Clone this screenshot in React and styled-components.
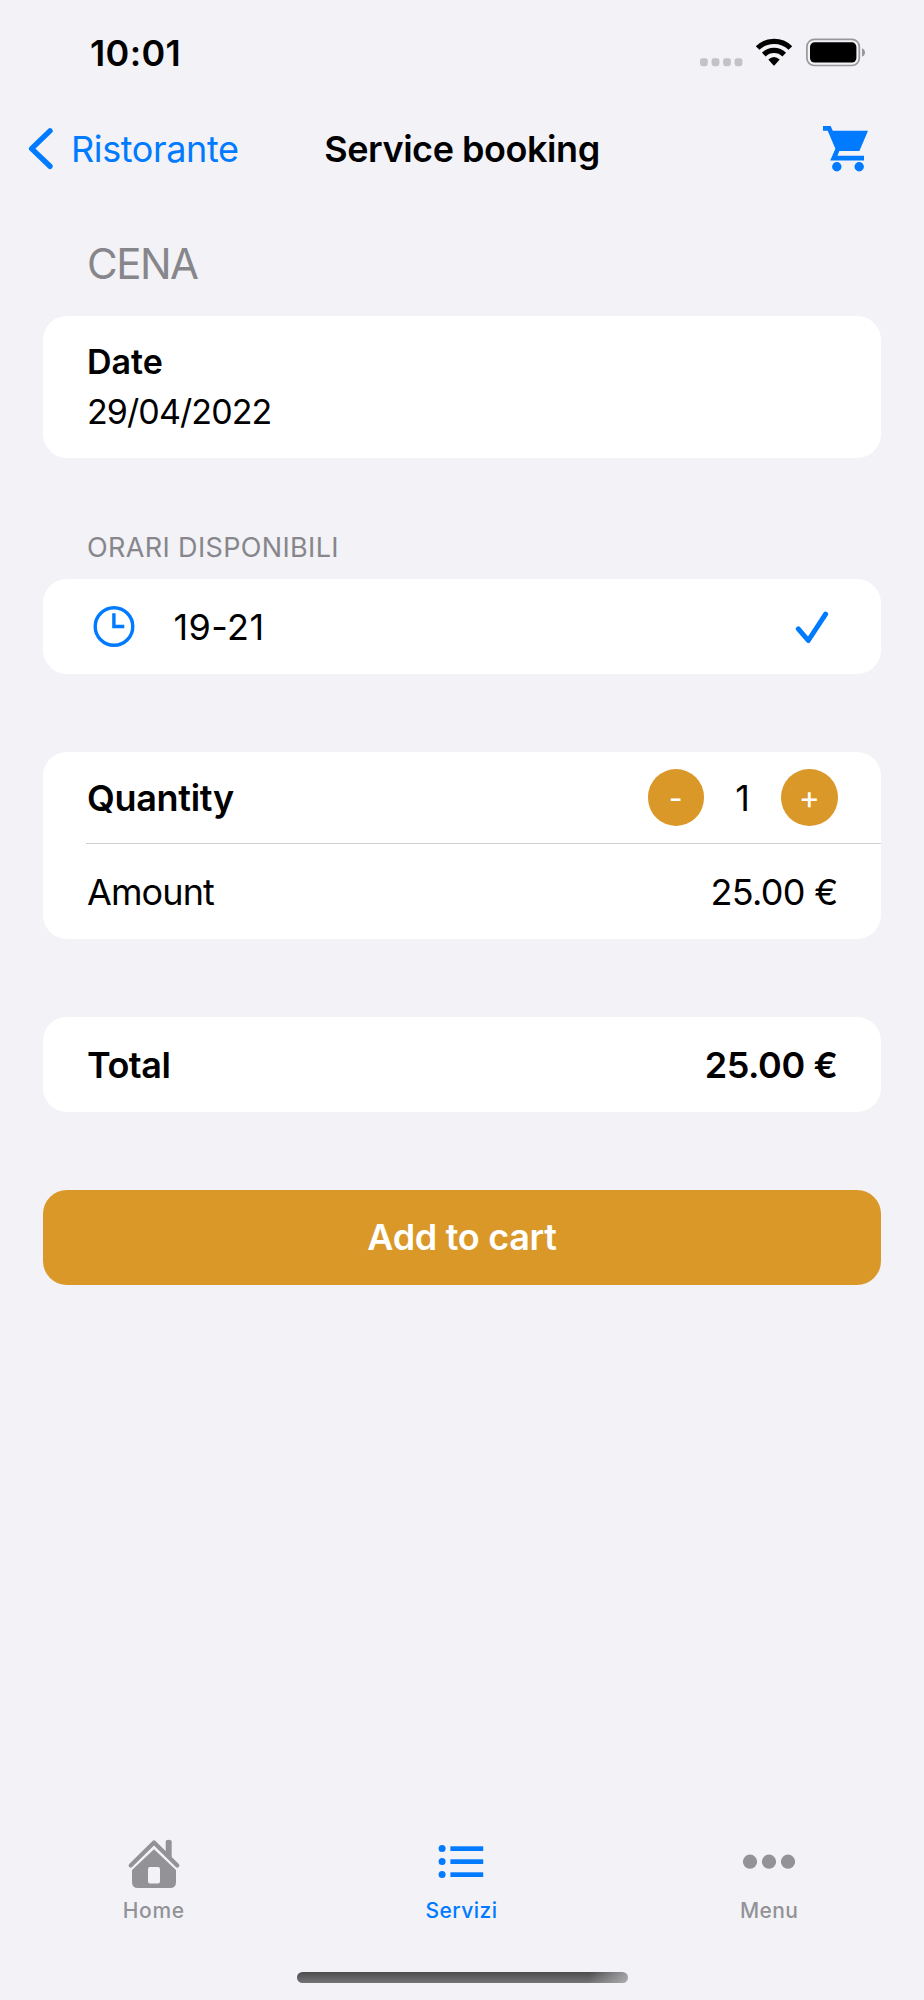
import React, { useState } from "react";
import styled, { createGlobalStyle } from "styled-components";

const BLUE = "#007aff";
const GOLD = "#da9828";
const GRAY = "#929297";

const GlobalStyle = createGlobalStyle`
  * { box-sizing: border-box; }
  body { margin: 0; background: #f2f2f7; }
  button { border: 0; padding: 0; background: none; font: inherit; color: inherit; cursor: pointer; }
  svg { display: block; flex: none; }
`;

const Screen = styled.div`
  width: 924px;
  height: 2000px;
  display: flex;
  flex-direction: column;
  background: #f2f2f7;
  color: #000;
  font-family: Inter, "Liberation Sans", sans-serif;
  font-size: 36px;
  line-height: 44px;
  white-space: nowrap;
`;

const StatusBar = styled.header`
  height: 106px;
  padding: 0 58px 0 90px;
  display: flex;
  justify-content: space-between;
  align-items: center;
`;

const Clock = styled.time`
  font-weight: 600;
  letter-spacing: 0.35px;
`;

const NavBar = styled.nav`
  height: 86px;
  padding: 0 56px 0 27px;
  display: grid;
  grid-template-columns: 1fr auto 1fr;
  align-items: center;
`;

const BackButton = styled.button`
  display: flex;
  align-items: center;
  gap: 16px;
  color: ${BLUE};
  letter-spacing: -0.38px;
`;

const Title = styled.h1`
  margin: 0 -14.5px 0 14.5px;
  font-size: 36px;
  font-weight: 600;
  letter-spacing: -0.45px;
`;

const CartButton = styled.button`
  display: flex;
  justify-self: end;
`;

const Main = styled.main`
  flex: 1;
  padding: 47px 43px 0;
`;

const SectionTitle = styled.h2`
  margin: 0 0 27px;
  padding-left: 44px;
  color: #86868b;
  font-weight: 400;
  font-size: 42px;
  line-height: 50px;
  letter-spacing: -1.5px;
`;

const SectionLabel = styled.h3`
  margin: 73.5px 0 15.5px;
  padding-left: 44px;
  color: #86868b;
  font-weight: 400;
  font-size: 27px;
  line-height: 32px;
  letter-spacing: 0.36px;
`;

const Card = styled.section`
  margin-top: ${(p) => (p.$spaced ? "78px" : "0")};
  border-radius: 24px;
  background: #fff;
`;

const DateCard = styled(Card)`
  padding: 21px 44px;
  font-size: 34px;
  line-height: 50px;
`;

const DateLabel = styled.div`
  font-weight: 600;
`;

const DateValue = styled.div`
  letter-spacing: -0.9px;
`;

const Row = styled.div`
  height: ${(p) => p.$height || 95}px;
  padding: 0 43.5px 0 44px;
  display: flex;
  align-items: center;
  justify-content: space-between;
`;

const Divider = styled.hr`
  height: 1px;
  margin: 0 0 0 43px;
  border: 0;
  background: #d0d0d3;
`;

const RowText = styled.span`
  font-weight: ${(p) => (p.$bold ? 600 : 400)};
  letter-spacing: ${(p) => p.$tracking || 0}px;
`;

const Slot = styled.div`
  display: flex;
  align-items: center;
  gap: 39px;
  padding-left: 5.5px;
`;

const CheckBox = styled.div`
  padding-right: 9px;
`;

const Stepper = styled.div`
  display: flex;
  align-items: center;
`;

const StepButton = styled.button`
  width: 56.5px;
  height: 56.5px;
  border-radius: 50%;
  background: ${GOLD};
  color: #fff;
  display: flex;
  align-items: center;
  justify-content: center;
  font-size: ${(p) => p.$size}px;
  line-height: 56px;
`;

const Count = styled.output`
  width: 77px;
  text-align: center;
`;

const PrimaryButton = styled.button`
  width: 100%;
  height: 95px;
  margin-top: 77.5px;
  border-radius: 24px;
  background: ${GOLD};
  color: #fff;
  font-weight: 600;
  letter-spacing: -0.3px;
`;

const TabBar = styled.nav`
  height: 137.5px;
  padding: 0 1px 0 0;
  display: grid;
  grid-template-columns: repeat(3, 1fr);
`;

const Tab = styled.button`
  display: flex;
  flex-direction: column;
  align-items: center;
  color: ${(p) => (p.$active ? BLUE : GRAY)};
  font-size: 21px;
  font-weight: 500;
  line-height: 25px;
  letter-spacing: ${(p) => p.$tracking}px;
`;

const TabIcon = styled.span`
  height: 56px;
  margin-bottom: 8px;
  display: flex;
  align-items: center;
`;

const HomeIndicator = styled.div`
  width: 331px;
  height: 11.5px;
  margin: 0 auto 17px;
  border-radius: 6px;
  background:
    linear-gradient(100deg, transparent 88%, rgba(190, 190, 194, 0.75) 100%),
    linear-gradient(#4c4c4d, #747476);
`;

function StatusGlyphs() {
  return (
    <svg width="166" height="30" viewBox="0 0 166 30">
      <g fill="#c3c2c7">
        <rect x="0" y="20.2" width="7.8" height="8" rx="2.4" />
        <rect x="11.6" y="20.2" width="7.8" height="8" rx="2.4" />
        <rect x="23.1" y="20.2" width="7.8" height="8" rx="2.4" />
        <rect x="34.6" y="20.2" width="7.8" height="8" rx="2.4" />
      </g>
      <g fill="none" stroke="#000" strokeWidth="5.2">
        <path d="M57.6 10A23.5 23.5 0 0 1 90.4 10" />
        <path d="M63.8 16.6A14.6 14.6 0 0 1 84.2 16.6" />
      </g>
      <path d="M68.3 21.6Q74 16.2 79.7 21.6L74.6 27.3Q74 27.9 73.4 27.3Z" />
      <rect x="106.9" y="1.3" width="52.4" height="26.2" rx="7.5" fill="none" stroke="#98979c" strokeWidth="1.7" />
      <rect x="110" y="4.3" width="46.4" height="20.2" rx="4.6" />
      <path d="M162 10.2C166 11.6 166 17.2 162 18.6Z" fill="#98979c" />
    </svg>
  );
}

function ChevronIcon() {
  return (
    <svg width="28" height="44" viewBox="0 0 28 44">
      <path d="M23 3.9L4.6 21.6L23 39.3" fill="none" stroke="currentColor" strokeWidth="5.4" strokeLinecap="round" strokeLinejoin="round" />
    </svg>
  );
}

function CartIcon() {
  return (
    <svg width="45" height="46" viewBox="0 0 45 46" fill={BLUE}>
      <path d="M0 0H7.6L9.8 4.8H45L36.4 25H16.4L14.4 29.8H41V34.4H7.2L12.4 22.8L4.7 4.8H0Z" />
      <circle cx="13.8" cy="40.8" r="4.7" />
      <circle cx="36.2" cy="40.8" r="4.7" />
    </svg>
  );
}

function ClockIcon() {
  return (
    <svg width="42" height="42" viewBox="0 0 42 42" fill="none" stroke={BLUE}>
      <circle cx="21" cy="20.5" r="18.8" strokeWidth="3.4" />
      <path d="M20.9 7.2V20.5H31.3" strokeWidth="3.4" />
    </svg>
  );
}

function CheckIcon() {
  return (
    <svg width="34" height="34" viewBox="0 0 34 34">
      <path d="M3.3 18.8L13.3 30.5L30.6 4.2" fill="none" stroke={BLUE} strokeWidth="5" strokeLinecap="round" strokeLinejoin="round" />
    </svg>
  );
}

function HomeIcon() {
  return (
    <svg width="52" height="47" viewBox="0 0 52 47" fill="currentColor" overflow="visible">
      <path d="M26 10.2L48 31V43Q48 49 42 49H10Q4 49 4 43V31ZM22 28Q20 28 20 30V42.5Q20 44.5 22 44.5H30Q32 44.5 32 42.5V30Q32 28 30 28Z" fillRule="evenodd" />
      <path d="M37.7 15V3.2Q37.7 .8 40.7 .8Q43.7 .8 43.7 3.2V21Z" />
      <path d="M2.7 26.6L26 3.4L49.3 26.6" fill="none" stroke="currentColor" strokeWidth="4.2" strokeLinecap="round" strokeLinejoin="round" />
    </svg>
  );
}

function ListIcon() {
  return (
    <svg width="46" height="34" viewBox="0 0 46 34" fill="currentColor">
      {[4, 17, 30].map((y) => (
        <g key={y}>
          <circle cx="4.1" cy={y - 0.4} r="3.5" />
          <rect x="12.4" y={y - 2.7} width="32.8" height="4.7" />
        </g>
      ))}
    </svg>
  );
}

function DotsIcon() {
  return (
    <svg width="54" height="16" viewBox="0 0 54 16" fill="currentColor">
      <circle cx="8" cy="7.7" r="7.1" />
      <circle cx="27" cy="7.7" r="7.1" />
      <circle cx="46" cy="7.7" r="7.1" />
    </svg>
  );
}

const tabs = [
  { label: "Home", Icon: HomeIcon, tracking: 0.7 },
  { label: "Servizi", Icon: ListIcon, tracking: 0.45 },
  { label: "Menu", Icon: DotsIcon, tracking: 0.4 },
];

export default function App() {
  const [quantity, setQuantity] = useState(1);
  const [active, setActive] = useState("Servizi");
  const amount = `${(quantity * 25).toFixed(2)} €`;

  return (
    <>
      <GlobalStyle />
      <Screen>
        <StatusBar>
          <Clock>10:01</Clock>
          <StatusGlyphs />
        </StatusBar>
        <NavBar>
          <BackButton>
            <ChevronIcon />
            Ristorante
          </BackButton>
          <Title>Service booking</Title>
          <CartButton aria-label="Cart">
            <CartIcon />
          </CartButton>
        </NavBar>
        <Main>
          <SectionTitle>CENA</SectionTitle>
          <DateCard>
            <DateLabel>Date</DateLabel>
            <DateValue>29/04/2022</DateValue>
          </DateCard>

          <SectionLabel>ORARI DISPONIBILI</SectionLabel>
          <Card>
            <Row>
              <Slot>
                <ClockIcon />
                <RowText $tracking={0.42}>19-21</RowText>
              </Slot>
              <CheckBox>
                <CheckIcon />
              </CheckBox>
            </Row>
          </Card>

          <Card $spaced>
            <Row $height={91}>
              <RowText $bold $tracking={-0.32}>Quantity</RowText>
              <Stepper>
                <StepButton $size={30} onClick={() => setQuantity((q) => Math.max(1, q - 1))}>-</StepButton>
                <Count>{quantity}</Count>
                <StepButton $size={32} onClick={() => setQuantity((q) => q + 1)}>+</StepButton>
              </Stepper>
            </Row>
            <Divider />
            <Row>
              <RowText $tracking={-0.9}>Amount</RowText>
              <RowText $tracking={-0.7}>{amount}</RowText>
            </Row>
          </Card>

          <Card $spaced>
            <Row>
              <RowText $bold $tracking={-0.5}>Total</RowText>
              <RowText $bold $tracking={-0.4}>{amount}</RowText>
            </Row>
          </Card>

          <PrimaryButton>Add to cart</PrimaryButton>
        </Main>
        <TabBar>
          {tabs.map(({ label, Icon, tracking }) => (
            <Tab key={label} $active={label === active} $tracking={tracking} onClick={() => setActive(label)}>
              <TabIcon>
                <Icon />
              </TabIcon>
              {label}
            </Tab>
          ))}
        </TabBar>
        <HomeIndicator />
      </Screen>
    </>
  );
}
